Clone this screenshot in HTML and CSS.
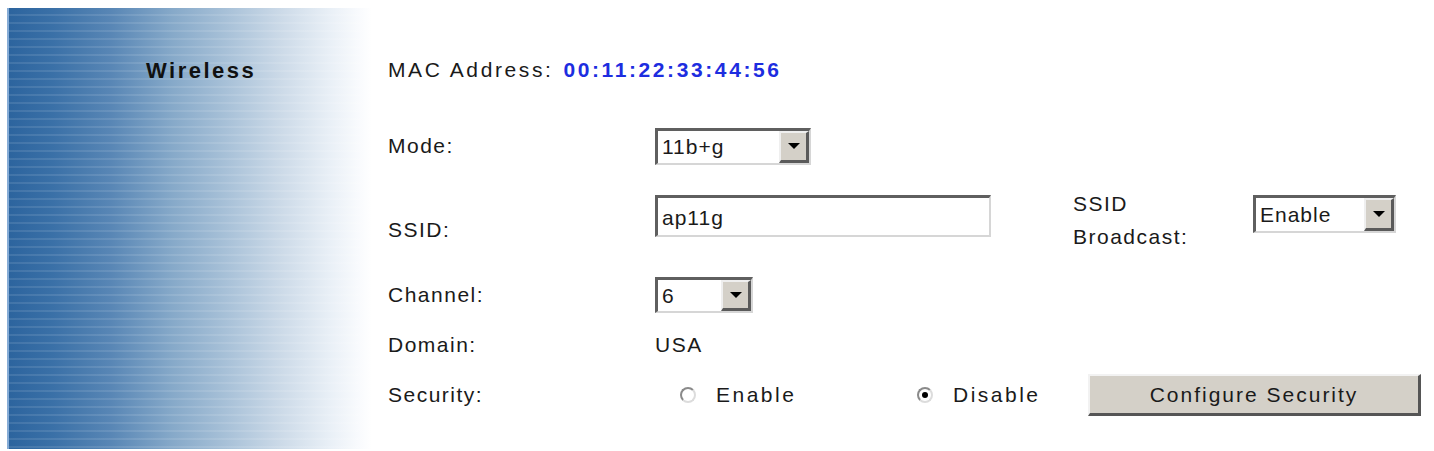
FILE: index.html
```html
<!DOCTYPE html>
<html lang="en">
<head>
  <meta charset="UTF-8" />
  <title>Wireless</title>
  <link rel="stylesheet" href="styles.css">
</head>
<body>
  <div class="page">
    <aside class="side">
      <h2 class="side-title">Wireless</h2>
    </aside>

    <main class="form">
      <div class="row row-mac">
        <span>MAC Address:</span>
        <b class="mac">00:11:22:33:44:56</b>
      </div>

      <div class="row row-mode">
        <span class="label">Mode:</span>
        <span class="select sel-mode"><span class="sel-text">11b+g</span><span class="sel-btn"></span></span>
      </div>

      <div class="row row-ssid">
        <span class="label label-ssid">SSID:</span>
        <span class="textbox">ap11g</span>
        <span class="label-bc">SSID<br>Broadcast:</span>
        <span class="select sel-bc"><span class="sel-text">Enable</span><span class="sel-btn"></span></span>
      </div>

      <div class="row row-channel">
        <span class="label">Channel:</span>
        <span class="select sel-channel"><span class="sel-text">6</span><span class="sel-btn"></span></span>
      </div>

      <div class="row row-domain">
        <span class="label">Domain:</span>
        <span>USA</span>
      </div>

      <div class="row row-security">
        <span class="label">Security:</span>
        <span class="radio-opt opt-enable"><span class="radio"></span>Enable</span>
        <span class="radio-opt opt-disable"><span class="radio checked"></span>Disable</span>
        <span class="button">Configure Security</span>
      </div>
    </main>
  </div>
</body>
</html>
```

FILE: styles.css
```css
body {
  margin: 0;
  background-color: #fff;
  font-family: 'Liberation Sans', Arial, sans-serif;
  font-size: 21px;
  letter-spacing: 1.5px;
  color: #1a1a1a;
}

.page {
  display: flex;
  padding: 8px 0 0 7px;
}

/* left blue bar */
.side {
  width: 365px;
  height: 441px;
  flex-shrink: 0;
  border-left: 2px solid #86acd6;
  box-sizing: border-box;
  background:
    repeating-linear-gradient(to bottom, rgba(255,255,255,0) 0, rgba(255,255,255,0) 6px, rgba(255,255,255,0.1) 6px, rgba(255,255,255,0.1) 8px),
    linear-gradient(to right, #2c649e 0%, #3a70a7 12%, #5886b5 28%, #86a9c9 45%, #a8c1d8 60%, #ccdae8 75%, #e8eff6 88%, #f8fafd 96%, #fff 100%);
}

.side-title {
  margin: 50px 0 0 137px;
  font-size: 22px;
  font-weight: bold;
  letter-spacing: 2.5px;
  color: #111;
}

.form {
  padding: 42px 0 0 16px;
  flex: 1;
}

.row {
  display: flex;
  align-items: center;
}

.label {
  width: 267px;
  flex-shrink: 0;
}

.row-mac {
  height: 40px;
  gap: 10px;
  letter-spacing: 2.6px;
}

.mac {
  color: #1d2de0;
  font-weight: bold;
  letter-spacing: 2.6px;
}

.row-mode {
  height: 40px;
  margin-top: 36px;
}

.row-ssid {
  height: 64px;
  margin-top: 22px;
}

.row-channel {
  height: 40px;
  margin-top: 23px;
}

.row-domain {
  height: 30px;
  margin-top: 15px;
}

.row-security {
  height: 44px;
  margin-top: 13px;
}

/* win classic controls */
.select, .textbox {
  display: flex;
  align-items: stretch;
  box-sizing: border-box;
  background: #fff;
  border-style: solid;
  border-width: 3px 2px 2px 3px;
  border-color: #5f5f5f #d6d6d6 #d6d6d6 #5f5f5f;
}

.sel-text {
  flex: 1;
  display: flex;
  align-items: center;
  padding-left: 4px;
  letter-spacing: 1px;
}

.sel-btn {
  width: 30px;
  flex-shrink: 0;
  background: #d4d0c8;
  border-style: solid;
  border-width: 2px 3px 3px 2px;
  border-color: #efefef #5a5a5a #5a5a5a #efefef;
  box-sizing: border-box;
  display: flex;
  align-items: center;
  justify-content: center;
}

.sel-btn::after {
  content: "";
  border-left: 6px solid transparent;
  border-right: 6px solid transparent;
  border-top: 6px solid #000;
}

.sel-mode {
  width: 156px;
  height: 37px;
}

.sel-channel {
  width: 98px;
  height: 36px;
}

.sel-bc {
  width: 143px;
  height: 38px;
  margin-bottom: 12px;
}

.label-ssid {
  margin-top: 20px;
}

.textbox {
  width: 336px;
  height: 42px;
  margin-bottom: 8px;
  align-items: flex-end;
  padding: 0 0 5px 4px;
  letter-spacing: 1px;
}

.label-bc {
  margin-left: 82px;
  width: 180px;
  line-height: 33px;
}

.radio-opt {
  display: flex;
  align-items: center;
  gap: 20px;
  letter-spacing: 2.5px;
}

.opt-enable {
  margin-left: 25px;
  width: 237px;
}

.radio {
  width: 16px;
  height: 16px;
  box-sizing: border-box;
  border-radius: 50%;
  border: 2px solid;
  border-color: #8a8a8a #dcdcdc #dcdcdc #8a8a8a;
  background: #fff;
  display: flex;
  align-items: center;
  justify-content: center;
}

.radio.checked::after {
  content: "";
  width: 6px;
  height: 6px;
  border-radius: 50%;
  background: #000;
}

.opt-disable {
  width: 171px;
}

.button {
  width: 333px;
  height: 42px;
  box-sizing: border-box;
  background: #d4d0c8;
  border-style: solid;
  border-width: 2px 3px 3px 2px;
  border-color: #f2f2f2 #555 #555 #f2f2f2;
  display: flex;
  align-items: center;
  justify-content: center;
  letter-spacing: 2px;
}
```
